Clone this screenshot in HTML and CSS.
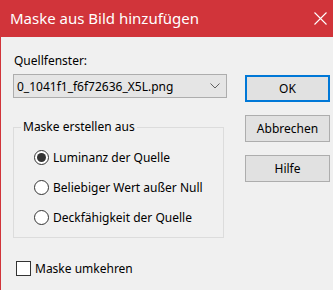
FILE: index.html
```html
<!DOCTYPE html>
<html lang="de">
<head>
    <meta charset="UTF-8">
    <title>Maske aus Bild hinzufügen</title>
    <link rel="stylesheet" href="styles.css">
</head>
<body>
    <div class="window">
        <div class="titlebar">
            <span class="title">Maske aus Bild hinzufügen</span>
            <svg class="close" width="13" height="13" viewBox="0 0 13 13">
                <path d="M0.5 0.5 L12.5 12.5 M12.5 0.5 L0.5 12.5" stroke="#fff" stroke-width="1.1" fill="none"/>
            </svg>
        </div>

        <div class="content">
            <div class="left">
                <div class="label">Quellfenster:</div>
                <div class="combo">
                    <span>0_1041f1_f6f72636_X5L.png</span>
                    <svg width="10" height="6" viewBox="0 0 10 6">
                        <path d="M0.5 0.5 L5 5 L9.5 0.5" stroke="#606060" stroke-width="1" fill="none"/>
                    </svg>
                </div>

                <fieldset class="group">
                    <legend>Maske erstellen aus</legend>
                    <div class="radio-row"><span class="radio checked"></span>Luminanz der Quelle</div>
                    <div class="radio-row"><span class="radio"></span>Beliebiger Wert außer Null</div>
                    <div class="radio-row"><span class="radio"></span>Deckfähigkeit der Quelle</div>
                </fieldset>

                <div class="check-row"><span class="checkbox"></span>Maske umkehren</div>
            </div>

            <div class="buttons">
                <button class="btn default">OK</button>
                <button class="btn">Abbrechen</button>
                <button class="btn">Hilfe</button>
            </div>
        </div>
    </div>
</body>
</html>
```

FILE: styles.css
```css
body {
    margin: 0;
    background-color: #f0f0f0;
    font-family: "Noto Sans", sans-serif;
    font-size: 12px;
    color: #000;
}

.window {
    width: 333px;
    height: 290px;
    box-sizing: border-box;
    border-left: 1px solid #d1343a;
    overflow: hidden;
}

.titlebar {
    height: 37px;
    background-color: #d1343a;
    display: flex;
    align-items: center;
    justify-content: space-between;
    padding: 0 6px 0 9px;
}

.title {
    color: #fff;
    font-size: 15px;
    margin-top: -1px;
}

.close {
    display: block;
}

.content {
    display: flex;
}

.left {
    width: 214px;
    padding-left: 12px;
}

.label {
    line-height: 16px;
    margin-top: 16px;
    padding-left: 1px;
}

.combo {
    margin-top: 5px;
    height: 24px;
    box-sizing: border-box;
    background: #e5e5e5;
    border: 1px solid #adadad;
    display: flex;
    align-items: center;
    justify-content: space-between;
    padding: 0 6px 0 3px;
}

.combo svg {
    display: block;
}

.group {
    margin: 21px 0 0 0;
    width: 211px;
    box-sizing: border-box;
    border: 1px solid #dcdcdc;
    padding: 7px 0 5px 20px;
}

.group legend {
    line-height: 16px;
    padding: 0 2px;
    margin-left: -13px;
}

.radio-row {
    height: 30px;
    display: flex;
    align-items: center;
}

.radio {
    width: 15px;
    height: 15px;
    box-sizing: border-box;
    border: 1px solid #333;
    border-radius: 50%;
    background: #fff;
    margin-right: 4px;
    display: flex;
    align-items: center;
    justify-content: center;
}

.radio.checked::after {
    content: "";
    width: 9px;
    height: 9px;
    border-radius: 50%;
    background: #333;
}

.check-row {
    display: flex;
    align-items: center;
    margin-top: 22px;
    margin-left: 3px;
}

.checkbox {
    width: 15px;
    height: 15px;
    box-sizing: border-box;
    border: 1px solid #333;
    background: #fff;
    margin-right: 4px;
}

.buttons {
    margin-left: 18px;
    padding-top: 38px;
    display: flex;
    flex-direction: column;
    gap: 13px;
}

.btn {
    width: 85px;
    height: 27px;
    box-sizing: border-box;
    background: #e1e1e1;
    border: 1px solid #adadad;
    font-family: "Noto Sans", sans-serif;
    font-size: 12px;
    color: #000;
    padding: 0;
}

.btn.default {
    border: 2px solid #0078d7;
}
```
